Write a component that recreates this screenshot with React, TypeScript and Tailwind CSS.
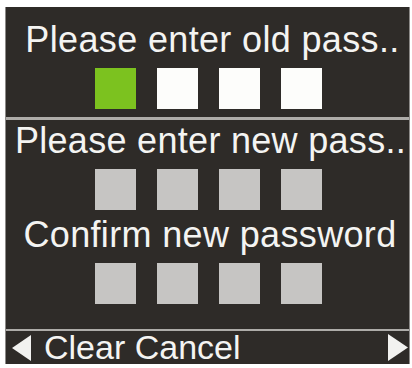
import React from "react";

function Squares({ colors }: { colors: string[] }) {
  return (
    <div className="flex justify-center gap-[21px] pl-[2px]">
      {colors.map((c, i) => (
        <div key={i} className={`w-[41px] h-[41px] ${c}`} />
      ))}
    </div>
  );
}

export default function App() {
  const font = { fontFamily: '"Liberation Sans", Arial, sans-serif' };
  return (
    <div className="w-[412px] h-[368px] bg-white pt-[7px] pl-[5px]" style={font}>
      <div className="w-[405px] h-[357px] flex flex-col bg-[#2e2b28] border-x border-[#8c8a88]">
        <div className="h-[110px] pt-[15px] flex flex-col">
          <div className="text-[36px] leading-[36px] text-[#f4f4f2] text-center whitespace-nowrap pl-[10px] tracking-[0.35px]">
            Please enter old pass..
          </div>
          <div className="mt-[10px]">
            <Squares colors={["bg-[#7cc21f]", "bg-[#fdfdfb]", "bg-[#fdfdfb]", "bg-[#fdfdfb]"]} />
          </div>
        </div>
        <div className="h-[3px] bg-[#aeaca9]" />
        <div className="h-[209px] pt-[3px] flex flex-col">
          <div className="text-[36px] leading-[36px] text-[#f4f4f2] text-center whitespace-nowrap pl-[6px] tracking-[0.3px]">
            Please enter new pass..
          </div>
          <div className="mt-[10px]">
            <Squares colors={["bg-[#c6c5c3]", "bg-[#c6c5c3]", "bg-[#c6c5c3]", "bg-[#c6c5c3]"]} />
          </div>
          <div className="mt-[7px] text-[36px] leading-[36px] text-[#f4f4f2] text-center whitespace-nowrap pl-[5px] tracking-[0.35px]">
            Confirm new password
          </div>
          <div className="mt-[10px]">
            <Squares colors={["bg-[#c6c5c3]", "bg-[#c6c5c3]", "bg-[#c6c5c3]", "bg-[#c6c5c3]"]} />
          </div>
        </div>
        <div className="h-[2px] bg-[#aeaca9]" />
        <div className="h-[33px] flex items-center relative">
          <svg width="20" height="26" viewBox="0 0 20 26" className="ml-[6px]">
            <polygon points="19,0 19,26 0,13" fill="#f2f2f0" />
          </svg>
          <span className="ml-[12px] text-[34px] leading-[33px] text-[#f4f4f2] whitespace-nowrap">
            Clear Cancel
          </span>
          <div className="flex-1" />
          <svg width="20" height="27" viewBox="0 0 20 27" className="mr-[1px]">
            <polygon points="0,0 0,27 20,13.5" fill="#f2f2f0" />
          </svg>
        </div>
      </div>
    </div>
  );
}
